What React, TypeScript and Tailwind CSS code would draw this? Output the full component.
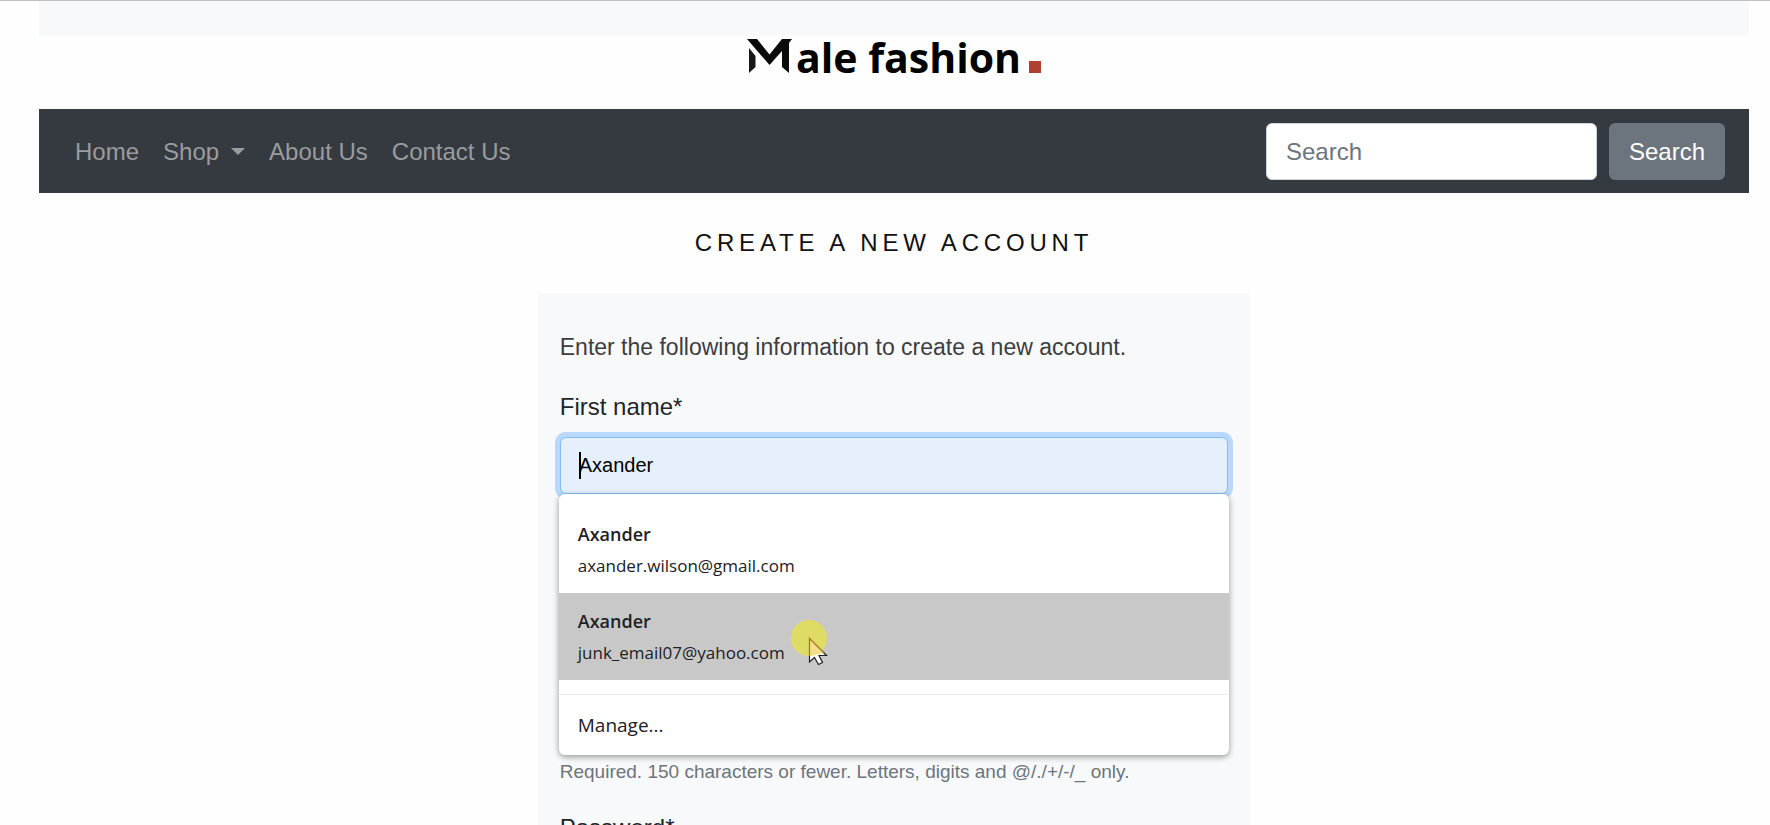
import React from "react";

const navLinkClass = "px-3 text-2xl leading-9 text-[#9a9c9f]";
const inputClass =
  "block h-[57px] w-full rounded-md border border-[#ced4da] bg-white px-[18px] text-xl text-[#212529] outline-none";
const labelClass = "mb-3 block text-2xl leading-9 text-[#212529]";
const coveredLabelClass = "invisible mb-3 block text-2xl leading-9";

const suggestions = [
  { name: "Axander", email: "axander.wilson@gmail.com", active: false },
  { name: "Axander", email: "junk_email07@yahoo.com", active: true },
];

function Logo() {
  return (
    <a href="#" aria-label="Male fashion" className="mt-[3px] flex h-[34px] items-baseline text-black">
      <svg width="45" height="34" viewBox="0 0 45 34" aria-hidden="true">
        <path d="M0 0H10L22.500 15.500 35 0H45L42 4V34L35 28V12L22.500 26z" fill="#0a0a0a" />
        <path d="M2 9l6.500 8v11L2 34z" fill="#15171a" />
      </svg>
      <span className="ml-1 font-['Open_Sans',sans-serif] text-[41px] leading-9 font-bold">ale fashion</span>
      <span className="ml-2 size-3 bg-[#b04030]" />
    </a>
  );
}

function Navbar() {
  return (
    <nav className="mt-9 flex items-center justify-between bg-[#343a40] px-6 pt-[14px] pb-[13px]">
      <ul className="flex items-center">
        <li><a href="#" className={navLinkClass}>Home</a></li>
        <li>
          <a href="#" className="flex items-center px-3 text-2xl leading-9 text-[#9a9c9f]">
            Shop
            <span className="ml-3 border-x-[7px] border-t-[7px] border-x-transparent border-t-[#9a9c9f]" />
          </a>
        </li>
        <li><a href="#" className={navLinkClass}>About Us</a></li>
        <li><a href="#" className={navLinkClass}>Contact Us</a></li>
      </ul>
      <form className="flex gap-3" onSubmit={(e) => e.preventDefault()}>
        <input
          type="search"
          aria-label="Search"
          placeholder="Search"
          className="h-[57px] w-[331px] rounded-md border border-[#ced4da] bg-white px-[19px] text-2xl outline-none placeholder:text-[#6c757d]"
        />
        <button type="submit" className="h-[57px] rounded-md bg-[#6c757d] px-5 text-2xl text-white">
          Search
        </button>
      </form>
    </nav>
  );
}

function Pointer() {
  return (
    <svg className="absolute top-[126px] left-[232px]" width="38" height="48" viewBox="0 0 38 48" aria-hidden="true">
      <path d="M18.500 18.500V42l5-4.500 4 7 4-2-3.500-7H35.500z" fill="#fff" stroke="#222" strokeWidth="1.200" />
      <circle cx="18" cy="18" r="18" fill="#e6e24a" fillOpacity="0.780" />
      <path d="M18.500 36V18.500L33 33" fill="#f3e08a" stroke="#a87820" strokeWidth="1.200" />
    </svg>
  );
}

function Suggestions() {
  return (
    <div className="absolute top-full -right-px -left-px z-10 rounded-md bg-white pt-3 font-['Open_Sans',sans-serif] text-[#202124] shadow-[0_2px_6px_rgba(0,0,0,0.4)]">
      <ul>
        {suggestions.map((s) => (
          <li key={s.email} className={s.active ? "bg-[#c8c8c8]" : "bg-white"}>
            <button type="button" className="flex h-[87px] w-full flex-col items-start justify-center px-[19px] text-left">
              <span className="text-lg leading-8 font-semibold">{s.name}</span>
              <span className="text-[17px] leading-8">{s.email}</span>
            </button>
          </li>
        ))}
      </ul>
      <button type="button" className="mt-[14px] flex h-[61px] w-full items-center border-t border-[#e8eaed] px-[19px] text-[19px]">
        Manage...
      </button>
      <Pointer />
    </div>
  );
}

export default function App() {
  return (
    <div className="h-screen overflow-hidden border-t border-[#c0c0c0] bg-[#fefefe] pr-[21px] pl-[39px] font-['Liberation_Sans',Arial,sans-serif]">
      <header>
        <div className="h-[35px] bg-[#f8f9fb]" />
        <div className="flex justify-center">
          <Logo />
        </div>
        <Navbar />
      </header>
      <main>
        <h1 className="mt-8 text-center text-2xl leading-9 tracking-[0.2em] text-[#111] uppercase">
          Create a new account
        </h1>
        <form className="mx-auto mt-8 w-5/12 rounded bg-[#f8f9fb] px-[22px] py-9" onSubmit={(e) => e.preventDefault()}>
          <p className="mb-6 text-[23px] leading-9 text-[#3d3d3d]">
            Enter the following information to create a new account.
          </p>
          <div className="mb-6">
            <label htmlFor="first" className={labelClass}>First name*</label>
            <div className="relative">
              <input
                id="first"
                defaultValue="Axander"
                className="block h-[57px] w-full rounded-md border border-[#80bdff] bg-[#e6f0fd] px-[18px] text-xl text-black shadow-[0_0_0_5px_#b8d9fb] outline-none"
              />
              <span className="absolute top-[15px] left-[19px] h-[27px] w-0.5 bg-black" />
              <Suggestions />
            </div>
          </div>
          <div className="mb-6">
            <label htmlFor="last" className={coveredLabelClass}>Last name*</label>
            <input id="last" className={inputClass} />
          </div>
          <div className="mb-6">
            <label htmlFor="user" className={coveredLabelClass}>Username*</label>
            <input id="user" className={inputClass} />
            <p className="mt-[5px] text-[19px] leading-[29px] text-[#6c757d]">
              Required. 150 characters or fewer. Letters, digits and @/./+/-/_ only.
            </p>
          </div>
          <div>
            <label htmlFor="password" className={labelClass}>Password*</label>
            <input id="password" type="password" className={inputClass} />
          </div>
        </form>
      </main>
    </div>
  );
}
